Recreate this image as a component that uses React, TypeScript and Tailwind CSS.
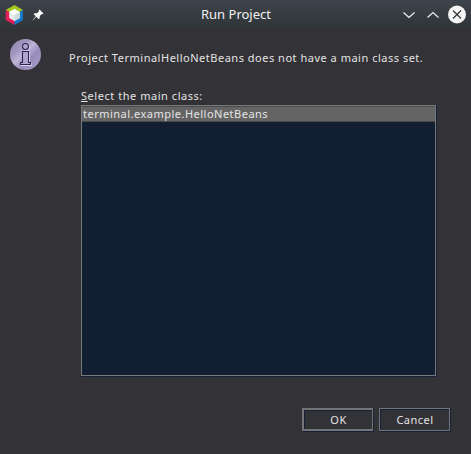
import React from "react";

const text = "font-['Noto_Sans','Open_Sans',sans-serif] text-[11px] leading-4 whitespace-nowrap text-[#e4e4e4]";

function Logo() {
  return (
    <svg className="h-5 w-5" viewBox="0 0 20 20">
      <path d="M9.5 0 18 5 9.5 10 .7 5Z" fill="#a4c91c" />
      <path d="M.7 5 9.5 10V20L.7 15Z" fill="#e51d5b" />
      <path d="M18 5 9.5 10V20L18 15Z" fill="#1878cc" />
      <path d="m9.5 4 5.3 3v6l-5.3 3-5.3-3V7Z" fill="#e9efee" />
      <path d="m9.5 4 5.3 3-5.3 3-5.3-3Z" fill="#fff" />
      <path d="m9.5 10 5.3-3v6l-5.3 3Z" fill="#cfdde0" />
    </svg>
  );
}

function Pin() {
  return (
    <svg className="h-3 w-3" viewBox="0 0 12 12" fill="#fafafa">
      <path d="M7.5.5 11.5 4.5 10.6 5.2 9.8 4.9 7.8 7 7.7 9.3 6.7 10.2 4.3 7.8 1 11.1.5 11.5.8 10.7 3.7 7.2 1.6 5.1 2.5 4.2 5 4.2 7 2.2 6.7 1.3Z" />
    </svg>
  );
}

function Info() {
  return (
    <svg className="h-8 w-8" viewBox="0 0 32 32">
      <defs>
        <linearGradient id="disc" x1="0" y1="0" x2="1" y2="1">
          <stop offset="0" stopColor="#9082ae" />
          <stop offset=".3" stopColor="#a196c0" />
          <stop offset=".46" stopColor="#bdb5d6" />
          <stop offset=".65" stopColor="#978aba" />
          <stop offset="1" stopColor="#aba1c8" />
        </linearGradient>
      </defs>
      <circle cx="15.5" cy="15.5" r="15.5" fill="url(#disc)" />
      <g fill="#b0a6ce" stroke="#dcd6ee" strokeWidth="1">
        <circle cx="16.5" cy="8.5" r="3" />
        <path d="M13.5 13.5h6v11h2v2h-10v-2h2Z" />
      </g>
      <g fill="#b0a6ce" stroke="#2d2457" strokeWidth="1.1">
        <circle cx="15.5" cy="7.5" r="3" />
        <path d="M12.5 12.5h6v11h2v2h-10v-2h2Z" />
      </g>
    </svg>
  );
}

export default function App() {
  return (
    <div className="flex h-[454px] w-[471px] flex-col overflow-hidden bg-[#333236]">
      <header className="flex h-[29px] shrink-0 items-center bg-linear-to-b from-[#3d444b] to-[#303437] pl-[5px] pr-1">
        <div className="flex w-[100px] items-center gap-[7px]"><Logo /><Pin /></div>
        <h1 className="flex-1 pb-px pl-24 font-['Noto_Sans',sans-serif] text-[13px] leading-5 text-[#eff0f1]">Run Project</h1>
        <svg className="h-5 w-[66px]" viewBox="0 0 66 20" fill="none" stroke="#f2f3f4" strokeWidth="1.1">
          <path d="m2.5 7.5 5.5 5 5.5-5M26.5 12.5l5.5-5 5.5 5" />
          <circle cx="56" cy="9.5" r="9" fill="#f5f5f5" stroke="none" />
          <path d="m52 5.5 8 8m0-8-8 8" stroke="#31363b" strokeWidth="1.2" />
        </svg>
      </header>
      <main className="flex flex-1 flex-col">
        <div className="flex h-[59px] items-start pl-[10px] pt-[10px]">
          <Info />
          <p className={`${text} ml-[27px] mt-[11px] tracking-[0.51px]`}>Project TerminalHelloNetBeans does not have a main class set.</p>
        </div>
        <label className={`${text} ml-[81px] h-[17px] tracking-[0.54px]`}><span className="underline">S</span>elect the main class:</label>
        <div className="ml-[81px] h-[272px] w-[356px] border-r border-b border-[#17213a]">
          <div className="h-full border border-[#76787a] bg-[#121e31]">
            <div className="flex h-4 items-center border-y border-y-[#4b4b4d] bg-[#646464] pl-px">
              <span className={`${text} tracking-[0.49px]`}>terminal.example.HelloNetBeans</span>
            </div>
          </div>
        </div>
        <div className="ml-[302px] mt-[31px] flex gap-[5px]">
          <button className="h-6 w-[72px] border-r border-b border-[#17213a]">
            <span className="flex h-full items-center justify-center border-2 border-r border-[#747476]">
              <span className={`${text} flex h-full w-full items-center justify-center border-t border-l border-[#17213a] tracking-[0.45px]`}>OK</span>
            </span>
          </button>
          <button className="h-6 w-[72px] border-r border-b border-[#17213a]">
            <span className="flex h-full border border-[#747476]">
              <span className={`${text} flex h-full w-full items-center justify-center border-t border-l border-[#17213a] tracking-[0.5px]`}>Cancel</span>
            </span>
          </button>
        </div>
      </main>
    </div>
  );
}
